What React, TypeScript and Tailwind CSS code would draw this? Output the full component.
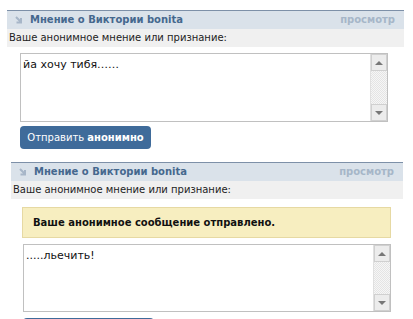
import React from "react";

const font = "font-['DejaVu_Sans',sans-serif]";

function Arrow() {
  return (
    <svg width="9" height="9" viewBox="0 0 9 9" className="shrink-0">
      <path d="M1 1 L6 6 M6 2 L6 6.5 L1.5 6.5" stroke="#a7b6c8" strokeWidth="2" fill="none" />
    </svg>
  );
}

function Header() {
  return (
    <>
      <div className="border-t border-[#7d90a8] bg-[#dae2ea] h-[19px] flex items-center pl-[8px] pr-[9px]">
        <Arrow />
        <span className="ml-[6px] text-[10px] font-bold text-[#45688e] leading-none">Мнение о Виктории bonita</span>
        <span className="ml-auto text-[10px] font-bold text-[#a6b6c8] leading-none">просмотр</span>
      </div>
      <div className="bg-[#f0f0f0] h-[18px] flex items-center pl-[2px] text-[10px] text-[#222] leading-none">
        Ваше анонимное мнение или признание:
      </div>
    </>
  );
}

function Scrollbar() {
  return (
    <div className="w-[17px] h-full flex flex-col bg-[repeating-conic-gradient(#e4e4e4_0_25%,#f6f6f6_0_50%)] bg-[length:2px_2px] border-l border-[#e0e0e0]">
      <div className="h-[17px] bg-[#ececec] border border-[#d0d0d0] flex items-center justify-center">
        <div className="w-0 h-0 border-l-[4px] border-r-[4px] border-b-[4px] border-l-transparent border-r-transparent border-b-[#777]" />
      </div>
      <div className="flex-1" />
      <div className="h-[17px] bg-[#ececec] border border-[#d0d0d0] flex items-center justify-center">
        <div className="w-0 h-0 border-l-[4px] border-r-[4px] border-t-[4px] border-l-transparent border-r-transparent border-t-[#777]" />
      </div>
    </div>
  );
}

function Box({ text, h }: { text: string; h: string }) {
  return (
    <div className={`w-[368px] ${h} border border-[#c0c0c0] bg-white flex`}>
      <div className="flex-1 pl-[2px] pt-[4px] text-[11px] text-[#111] leading-[14px]">{text}</div>
      <Scrollbar />
    </div>
  );
}

function Button() {
  return (
    <div className="w-[131px] h-[23px] rounded-[4px] bg-[#3f6b9a] flex items-center justify-center text-[10px] text-white leading-none">
      Отправить&nbsp;<b>анонимно</b>
    </div>
  );
}

export default function App() {
  return (
    <div className={`w-[413px] h-[319px] overflow-hidden bg-white ${font}`}>
      <div className="pt-[10px] pl-[7px] w-[404px]">
        <Header />
        <div className="pl-[13px] pt-[6px]">
          <Box text="йа хочу тибя……" h="h-[69px]" />
          <div className="mt-[4px]">
            <Button />
          </div>
        </div>
      </div>
      <div className="mt-[13px] pl-[11px] w-[403px]">
        <Header />
        <div className="pl-[11px] pt-[8px]">
          <div className="w-[369px] h-[31px] bg-[#f7eec0] border border-[#e6d9a3] flex items-center pl-[10px] text-[10px] font-bold text-[#111]">
            Ваше анонимное сообщение отправлено.
          </div>
          <div className="mt-[6px] pl-[1px]">
            <Box text=".....льечить!" h="h-[68px]" />
          </div>
          <div className="mt-[6px] pl-[1px]">
            <div className="w-[131px] h-[23px] rounded-[4px] bg-[#3f6b9a]" />
          </div>
        </div>
      </div>
    </div>
  );
}
